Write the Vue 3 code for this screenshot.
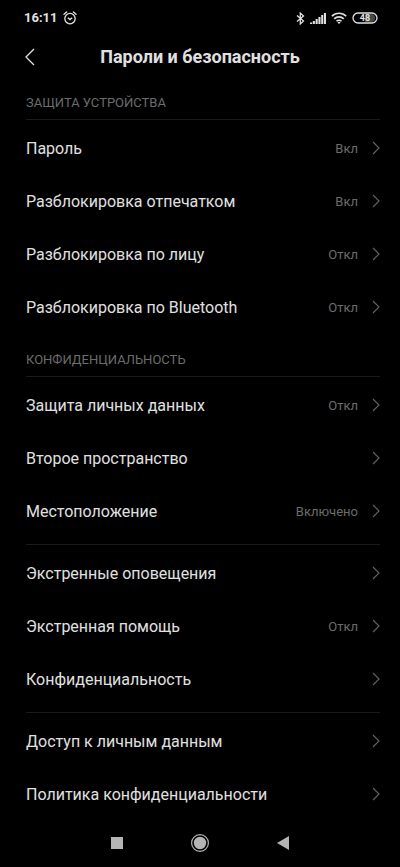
<script setup>
const sections = [
  {
    title: 'ЗАЩИТА УСТРОЙСТВА',
    rows: [
      { label: 'Пароль', value: 'Вкл' },
      { label: 'Разблокировка отпечатком', value: 'Вкл' },
      { label: 'Разблокировка по лицу', value: 'Откл' },
      { label: 'Разблокировка по Bluetooth', value: 'Откл' },
    ],
  },
  {
    title: 'КОНФИДЕНЦИАЛЬНОСТЬ',
    rows: [
      { label: 'Защита личных данных', value: 'Откл' },
      { label: 'Второе пространство' },
      { label: 'Местоположение', value: 'Включено' },
    ],
  },
  {
    rows: [
      { label: 'Экстренные оповещения' },
      { label: 'Экстренная помощь', value: 'Откл' },
      { label: 'Конфиденциальность' },
    ],
  },
  {
    rows: [
      { label: 'Доступ к личным данным' },
      { label: 'Политика конфиденциальности' },
    ],
  },
]
</script>

<template>
  <div class="screen">
    <div class="status">
      <div class="status-side">
        <span class="time">16:11</span>
        <svg class="alarm" width="14" height="14" viewBox="0 0 14 14" fill="none" stroke="currentColor">
          <circle cx="7" cy="7.6" r="5.2" stroke-width="1.3" />
          <path d="M1 3.2 3.6 1M13 3.2 10.4 1" stroke-width="1.4" stroke-linecap="round" />
          <path d="M4.8 6.8 7 8.6 9.2 6.8" stroke-width="1.3" />
        </svg>
      </div>
      <div class="status-side">
        <svg width="9" height="13" viewBox="0 0 9 13" fill="none" stroke="currentColor" stroke-width="1.3">
          <path d="M1 3.5 7.5 9 4.3 11.9V1.1L7.5 4 1 9.5" />
        </svg>
        <svg width="16" height="12" viewBox="0 0 16 12" fill="currentColor">
          <path d="M0 10.500h2.100V12H0zM2.800 9h2.100v3H2.800zM5.600 7h2.100v5H5.600zM8.400 5h2.100v7H8.400zM11.200 3h2v9h-2zM13.900 1H16v11h-2.100z" />
        </svg>
        <svg width="16" height="12" viewBox="0 0 16 12" fill="none" stroke="currentColor" stroke-width="1.6">
          <path d="M.8 4.300a10.200 10.200 0 0 1 14.400 0M3.200 6.900a6.800 6.800 0 0 1 9.600 0M5.500 9.300a3.500 3.500 0 0 1 5 0" />
          <path d="M8 12 6.500 10.500a2 2 0 0 1 3 0Z" fill="currentColor" stroke="none" />
        </svg>
        <svg class="battery" width="26" height="12" viewBox="0 0 26 12">
          <path d="M13 2h6a4 4 0 0 1 0 8h-6z" fill="#484848" />
          <rect x="1" y="1" width="24" height="10" rx="5" fill="none" stroke="currentColor" stroke-width="1.3" />
          <text x="13" y="9" text-anchor="middle" fill="currentColor">48</text>
        </svg>
      </div>
    </div>

    <header class="header">
      <button class="back" type="button" aria-label="Назад">
        <svg width="10" height="18" viewBox="0 0 10 18" fill="none" stroke="currentColor" stroke-width="1.3">
          <path d="M9 1 1 9l8 8" />
        </svg>
      </button>
      <h1>Пароли и безопасность</h1>
    </header>

    <main>
      <section v-for="(section, i) in sections" :key="i">
        <h2 v-if="section.title">{{ section.title }}</h2>
        <div class="rows">
          <button v-for="row in section.rows" :key="row.label" class="row" type="button">
            <span class="label">{{ row.label }}</span>
            <span v-if="row.value" class="value">{{ row.value }}</span>
            <svg class="chevron" width="8" height="14" viewBox="0 0 8 14" fill="none" stroke="currentColor" stroke-width="1.1">
              <path d="M1 1l6 6-6 6" />
            </svg>
          </button>
        </div>
      </section>
    </main>

    <nav class="nav">
      <button type="button" aria-label="Недавние">
        <svg width="20" height="20" viewBox="0 0 20 20"><path d="M4 4h12v12H4z" fill="currentColor" /></svg>
      </button>
      <button type="button" aria-label="Домой">
        <svg width="20" height="20" viewBox="0 0 20 20">
          <circle cx="10" cy="10" r="8.400" fill="none" stroke="currentColor" stroke-width="1.2" />
          <circle cx="10" cy="10" r="6.200" fill="currentColor" />
        </svg>
      </button>
      <button type="button" aria-label="Назад">
        <svg width="20" height="20" viewBox="0 0 20 20"><path d="M4 10 16 3v14z" fill="currentColor" /></svg>
      </button>
    </nav>
  </div>
</template>

<style>
body {
  background: #000;
}
</style>

<style scoped>
.screen {
  display: flex;
  flex-direction: column;
  min-height: 100vh;
  background: #000;
  color: #e0e0e0;
  font-family: Roboto, "Noto Sans", sans-serif;
}

svg {
  display: block;
  flex: none;
}

button {
  margin: 0;
  padding: 0;
  border: 0;
  background: none;
  color: inherit;
  font: inherit;
  cursor: pointer;
}

.status {
  display: flex;
  align-items: center;
  justify-content: space-between;
  height: 36px;
  padding: 0 22px 0 24px;
}

.status-side {
  display: flex;
  align-items: center;
  gap: 5px;
}

.time {
  font-size: 13px;
  font-weight: 700;
  line-height: 16px;
}

.battery text {
  font-size: 9px;
  font-weight: 700;
}

.header {
  display: grid;
  grid-template-columns: 24px 1fr 24px;
  align-items: center;
  height: 42px;
  padding: 0 25px;
}

h1 {
  margin: 0;
  font-size: 18px;
  font-weight: 700;
  line-height: 24px;
  text-align: center;
}

main {
  padding: 0 20px 0 26px;
}

h2 {
  margin: 0;
  padding: 17px 0 8px;
  color: #6c6c6c;
  font-size: 13px;
  font-weight: 400;
  line-height: 16px;
}

.rows {
  padding: 2px 0 1px;
  border-top: 1px solid #1a1a1a;
}

section:not(:first-child) .rows {
  padding-bottom: 6px;
}

section:last-child .rows {
  padding-bottom: 0;
}

.row {
  display: flex;
  align-items: center;
  width: 100%;
  height: 53px;
  text-align: left;
}

.label {
  flex: 1;
  font-size: 16px;
  line-height: 24px;
}

.value {
  color: #6c6c6c;
  font-size: 13px;
  line-height: 20px;
}

.chevron {
  margin: 0 0 2px 14px;
  color: #646464;
}

.nav {
  display: flex;
  align-items: center;
  justify-content: center;
  gap: 63px;
  height: 42px;
  margin-top: auto;
  padding-bottom: 3px;
  color: #b4b4b4;
}
</style>
